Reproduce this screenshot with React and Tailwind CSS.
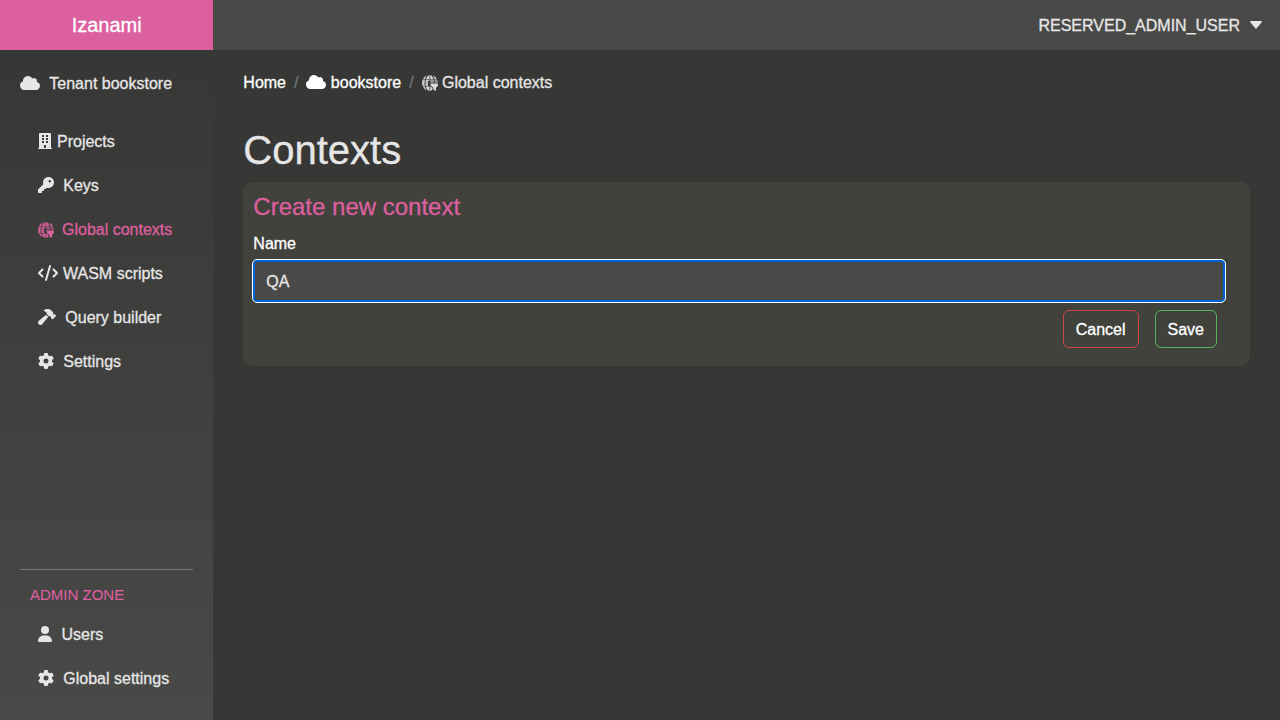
import React from "react";
import { FaBuilding } from "react-icons/fa";
import { FaCloud, FaKey, FaCode, FaHammer, FaGear, FaUser } from "react-icons/fa6";

function GlobeFilter({ className }) {
  return (
    <svg viewBox="0 0 16 16" className={className} fill="currentColor">
      <path d="M7.500 0v4.500H4C4.600 2.200 5.900 .5 7.500 0zM8.300 0c1.500 .5 2.700 2.200 3.200 4.500H8.300zM5 .5C4 1.500 3.300 2.900 2.900 4.500H.8C1.600 2.600 3.200 1.200 5 .5zM10.800 .5c1.800 .7 3.400 2.100 4.200 4h-2.300c-.4-1.600-1-3-1.900-4z" />
      <path d="M.5 5h2.300c-.3 1.900-.3 3.900 0 5.900H.5C-.1 8.900-.1 6.800 .5 5z" opacity=".9" />
      <path d="M3.600 5h3.900v1H6v4.900H3.600c-.3-2-.3-4 0-5.900z" opacity=".85" />
      <path d="M8.300 5h3.500l.2 2.800H8.300zM12.600 5h2.800c.3 .9 .4 1.800 .4 2.800h-3z" opacity=".6" />
      <path d="M.9 11.400h2c.4 1.600 1.100 2.900 2 3.900-1.700-.8-3.200-2.100-4-3.900zM3.800 11.400h3.700V16c-1.700-.6-3.100-2.300-3.700-4.600zM8.300 11.600h.8l1.700 2.400c-.6 1-1.500 1.700-2.500 2z" />
      <path d="M8.500 8.600H16v1.900l-2 2.500v3l-2.600-1.200V13L8.500 10.300z" />
    </svg>
  );
}

const ICON = "shrink-0";

function NavItem({ icon, label, active }) {
  return (
    <a className={`flex h-11 items-center pl-[38px] ${active ? "text-[#dc5f9f]" : "text-[#e6e6e6]"}`}>
      {icon}
      <span className="pt-0.5">{label}</span>
    </a>
  );
}

export default function App() {
  return (
    <div className="flex h-screen flex-col overflow-hidden bg-[#373735] font-['Liberation_Sans',Arial,sans-serif] text-base text-[#e6e6e6] [-webkit-text-stroke:0.3px]">
      <header className="flex h-[50px] shrink-0 bg-[#494948]">
        <div className="flex w-1/6 items-center justify-center bg-[#dc5f9f] text-xl text-white">Izanami</div>
        <div className="flex flex-1 items-center justify-end pr-[18px]">
          <span className="pt-0.5">RESERVED_ADMIN_USER</span>
          <svg viewBox="0 0 12 8" className="ml-[10px] h-2 w-3" fill="currentColor">
            <path d="M.8 0h10.400c.7 0 1 .8 .5 1.300L6.700 7.300c-.4 .5-1 .5-1.400 0L.3 1.300C-.2 .8 .1 0 .8 0z" />
          </svg>
        </div>
      </header>
      <div className="flex min-h-0 flex-1">
        <aside className="flex w-1/6 flex-col bg-linear-to-b from-[#373735] to-[#494948]">
          <div className="mt-[21px] flex h-6 items-center pl-5">
            <FaCloud className="h-4 w-5 shrink-0" />
            <span className="ml-[9.300px] pt-0.5">Tenant bookstore</span>
          </div>
          <nav className="mt-6">
            <NavItem icon={<FaBuilding className={`${ICON} mr-[5px] h-4 w-3.5`} />} label="Projects" />
            <NavItem icon={<FaKey className={`${ICON} mr-[9.300px] size-4`} />} label="Keys" />
            <NavItem icon={<GlobeFilter className={`${ICON} mr-2 mt-0.5 size-4`} />} label="Global contexts" active />
            <NavItem icon={<FaCode className={`${ICON} mr-[5px] h-4 w-5`} />} label="WASM scripts" />
            <NavItem icon={<FaHammer className={`${ICON} mr-[9.300px] h-4 w-[18px]`} />} label="Query builder" />
            <NavItem icon={<FaGear className={`${ICON} mr-[9.300px] size-4`} />} label="Settings" />
          </nav>
          <div className="mt-auto mb-5">
            <div className="mx-5 border-t border-[#757573]" />
            <div className="mt-[13px] mb-[5px] pl-[30px] text-[15px] leading-6 text-[#dc5f9f] [-webkit-text-stroke:0.1px]">ADMIN ZONE</div>
            <NavItem icon={<FaUser className={`${ICON} mr-[9.500px] h-4 w-3.5`} />} label="Users" />
            <NavItem icon={<FaGear className={`${ICON} mr-[9.300px] size-4`} />} label="Global settings" />
          </div>
        </aside>
        <main className="flex-1 px-[30px] pt-5">
          <div className="flex h-6 items-center text-white">
            <span className="pt-0.5">Home</span>
            <span className="mx-2 pt-0.5 text-[#6c757d]">/</span>
            <FaCloud className="mr-[4.400px] h-4 w-5" />
            <span className="pt-0.5">bookstore</span>
            <span className="mx-2 pt-0.5 text-[#6c757d]">/</span>
            <GlobeFilter className="mt-0.5 mr-[4.400px] size-4 text-[#d8d8d8]" />
            <span className="pt-0.5 text-[#e6e6e6]">Global contexts</span>
          </div>
          <h1 className="mt-8 text-[40px] leading-12">Contexts</h1>
          <section className="mt-2 h-[184px] rounded-[10px] bg-[#42423d] px-[10px] pt-[10px]">
            <h4 className="text-2xl leading-[29px] text-[#dc5f9f]">Create new context</h4>
            <label className="mt-[11px] block leading-6 text-white">Name</label>
            <div className="mt-1 mr-[15px] flex h-[42px] items-center rounded-[4px] border-2 border-[#0062d6] bg-[#494948] pt-0.5 pl-[11px] outline outline-white">
              QA
            </div>
            <div className="mt-2 mr-[23px] flex justify-end gap-4 text-white">
              <button className="h-[38px] rounded-md border border-[#d0433e] px-3 pt-0.5">Cancel</button>
              <button className="h-[38px] rounded-md border border-[#57b558] px-3 pt-0.5">Save</button>
            </div>
          </section>
        </main>
      </div>
    </div>
  );
}
